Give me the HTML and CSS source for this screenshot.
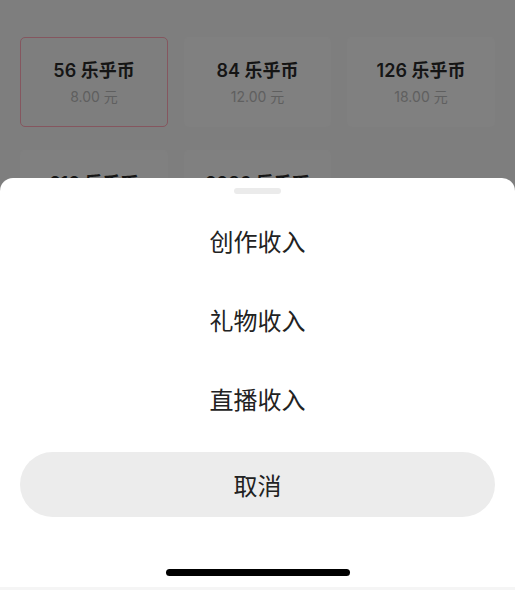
FILE: index.html
```
<html>
<head>
    <title>乐乎币充值</title>
    <link rel="stylesheet" href="styles.css">
</head>
<body>
    <div class="price-grid">
        <div class="price-card selected">
            <div class="coins">56 乐乎币</div>
            <div class="money">8.00 元</div>
        </div>
        <div class="price-card">
            <div class="coins">84 乐乎币</div>
            <div class="money">12.00 元</div>
        </div>
        <div class="price-card">
            <div class="coins">126 乐乎币</div>
            <div class="money">18.00 元</div>
        </div>
        <div class="price-card">
            <div class="coins">210 乐乎币</div>
            <div class="money">30.00 元</div>
        </div>
        <div class="price-card">
            <div class="coins">2086 乐乎币</div>
            <div class="money">298.00 元</div>
        </div>
    </div>

    <!-- action sheet over the dimmed page -->
    <div class="sheet">
        <div class="handle"></div>
        <ul class="menu">
            <li>创作收入</li>
            <li>礼物收入</li>
            <li>直播收入</li>
        </ul>
        <div class="cancel">取消</div>
        <div class="home-bar"></div>
    </div>
</body>
</html>
```

FILE: styles.css
```
body {
    margin: 0;
    height: 590px;
    overflow: hidden;
    position: relative;
    background: #7e7e7e;
    font-family: "Noto Sans CJK SC", "Noto Sans", sans-serif;
}

.price-grid {
    display: grid;
    grid-template-columns: 148px 147px 148px;
    column-gap: 16px;
    row-gap: 23px;
    padding: 37px 20px;
}

.price-card {
    height: 90px;
    box-sizing: border-box;
    border: 1px solid transparent;
    border-radius: 5px;
    background: #808080;
    display: flex;
    flex-direction: column;
    align-items: center;
    justify-content: center;
    font-family: Inter, "Noto Sans CJK SC", sans-serif;
}

.price-card.selected {
    border-color: #85565f;
    background: #7e7e7e;
}

.coins {
    font-size: 18px;
    font-weight: 600;
    color: #151515;
    line-height: 24px;
    margin-top: 2px;
}

.money {
    font-size: 14px;
    color: #5f5f5f;
    line-height: 20px;
    margin-top: 4px;
}

.sheet {
    position: absolute;
    left: 0;
    right: 0;
    bottom: 0;
    height: 412px;
    background: #fff;
    border-radius: 13px 13px 0 0;
    display: flex;
    flex-direction: column;
    align-items: center;
    border-bottom: 3px solid #f5f5f5;
    box-sizing: border-box;
}

.handle {
    width: 47px;
    height: 6px;
    border-radius: 3px;
    background: #ebebeb;
    margin-top: 10px;
}

.menu {
    list-style: none;
    margin: 7px 0 0;
    padding: 0;
    width: 100%;
}

.menu li {
    height: 79px;
    display: flex;
    align-items: center;
    justify-content: center;
    font-size: 24px;
    color: #222;
}

.cancel {
    width: 475px;
    height: 65px;
    margin-top: 14px;
    border-radius: 33px;
    background: #ececec;
    display: flex;
    align-items: center;
    justify-content: center;
    font-size: 24px;
    color: #222;
}

.home-bar {
    width: 184px;
    height: 7px;
    border-radius: 4px;
    background: #000;
    margin-top: 52px;
}
```
